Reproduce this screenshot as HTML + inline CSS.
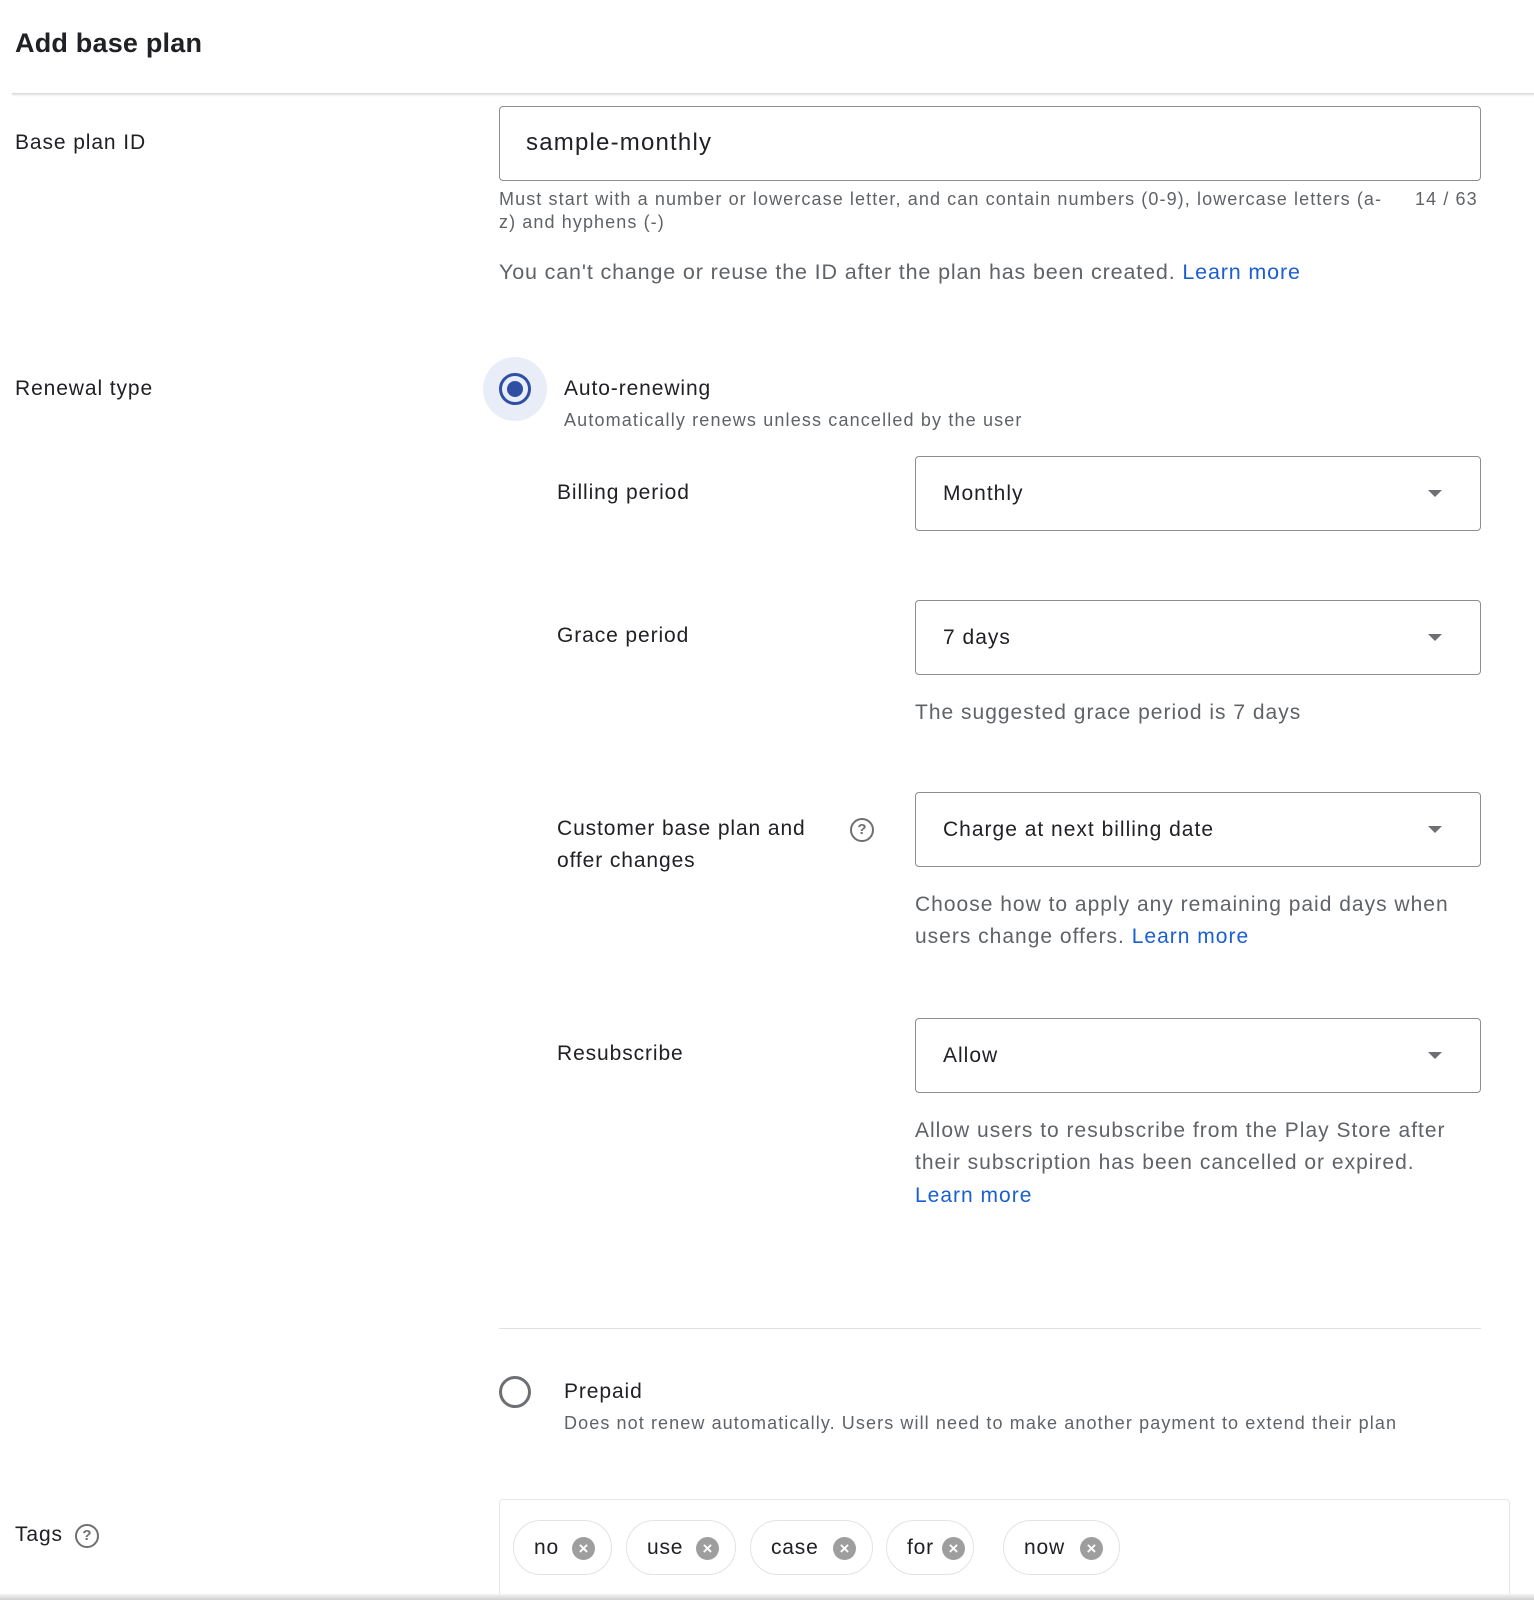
<!DOCTYPE html>
<html><head><meta charset="utf-8"><style>
*{margin:0;padding:0;box-sizing:border-box}
body{width:1534px;height:1600px;background:#fff;position:relative;overflow:hidden;font-family:"Liberation Sans",Arial,sans-serif;color:#202124}
.a{position:absolute;white-space:nowrap;line-height:28px}
.lbl{font-size:21px;color:#202124;letter-spacing:0.9px}
.help{font-size:18px;color:#5f6368;line-height:23px;letter-spacing:1.1px}
.body{font-size:21px;color:#5f6368;line-height:32px;letter-spacing:1px}
.link{color:#1a5fd0}
.box{position:absolute;border:1px solid #8a8d91;border-radius:4px;left:915px;width:566px;height:75px}
.box span{position:absolute;left:27px;top:23px;font-size:21px;color:#202124;line-height:28px;letter-spacing:1px;white-space:nowrap}
.box i{position:absolute;right:38px;top:33px;width:0;height:0;border-left:7px solid transparent;border-right:7px solid transparent;border-top:7px solid #6d6f72}
.chip{position:absolute;top:1520px;height:55px;border:1px solid #e3e3e3;border-radius:28px;font-size:21px;line-height:53px;padding-left:20px;color:#202124;letter-spacing:0.8px}
.chip b{position:absolute;right:16px;top:16px;width:23px;height:23px;border-radius:50%;background:#9e9e9e;color:#fff;font-size:17px;line-height:23px;text-align:center;font-weight:bold;letter-spacing:0}
.q{position:absolute;width:24px;height:24px;border:2px solid #6d6f72;border-radius:50%;font-size:15px;line-height:20px;text-align:center;color:#6d6f72;font-weight:bold}
</style></head><body>
<div class="a" style="left:15px;top:27px;font-size:27px;line-height:32px;color:#202124;font-weight:bold;letter-spacing:0.2px">Add base plan</div>
<div style="position:absolute;left:12px;top:93px;width:1522px;height:4px;background:linear-gradient(#d4d4d4,#f4f4f4 60%,#fff)"></div>

<div class="a lbl" style="left:15px;top:129px">Base plan ID</div>
<div style="position:absolute;left:499px;top:106px;width:982px;height:75px;border:1px solid #8a8d91;border-radius:4px"></div>
<div class="a" style="left:526px;top:129px;font-size:24px;color:#202124;letter-spacing:1.2px">sample-monthly</div>
<div class="a help" style="left:499px;top:188px">Must start with a number or lowercase letter, and can contain numbers (0-9), lowercase letters (a-</div>
<div class="a help" style="left:499px;top:211px">z) and hyphens (-)</div>
<div class="a help" style="left:1415px;top:188px">14 / 63</div>
<div class="a body" style="left:499px;top:256px;font-size:21.5px;letter-spacing:0.85px">You can't change or reuse the ID after the plan has been created. <span class="link">Learn more</span></div>

<div class="a lbl" style="left:15px;top:375px">Renewal type</div>
<div style="position:absolute;left:483px;top:357px;width:64px;height:64px;border-radius:50%;background:#e8edf8"></div>
<div style="position:absolute;left:499px;top:373px;width:32px;height:32px;border-radius:50%;border:3px solid #2e4fa3"></div>
<div style="position:absolute;left:507px;top:381px;width:16px;height:16px;border-radius:50%;background:#2e4fa3"></div>
<div class="a lbl" style="left:564px;top:375px">Auto-renewing</div>
<div class="a help" style="left:564px;top:409px;letter-spacing:1.15px">Automatically renews unless cancelled by the user</div>

<div class="a lbl" style="left:557px;top:479px">Billing period</div>
<div class="box" style="top:456px"><span>Monthly</span><i></i></div>

<div class="a lbl" style="left:557px;top:622px">Grace period</div>
<div class="box" style="top:600px"><span>7 days</span><i></i></div>
<div class="a body" style="left:915px;top:697px">The suggested grace period is 7 days</div>

<div class="a lbl" style="left:557px;top:815px">Customer base plan and</div>
<div class="a lbl" style="left:557px;top:847px">offer changes</div>
<div class="q" style="left:850px;top:818px">?</div>
<div class="box" style="top:792px"><span>Charge at next billing date</span><i></i></div>
<div class="a body" style="left:915px;top:889px">Choose how to apply any remaining paid days when</div>
<div class="a body" style="left:915px;top:921px">users change offers. <span class="link">Learn more</span></div>

<div class="a lbl" style="left:557px;top:1040px">Resubscribe</div>
<div class="box" style="top:1018px"><span>Allow</span><i></i></div>
<div class="a body" style="left:915px;top:1115px">Allow users to resubscribe from the Play Store after</div>
<div class="a body" style="left:915px;top:1147px">their subscription has been cancelled or expired.</div>
<div class="a body" style="left:915px;top:1180px"><span class="link">Learn more</span></div>

<div style="position:absolute;left:499px;top:1328px;width:982px;height:1px;background:#e0e0e0"></div>
<div style="position:absolute;left:499px;top:1376px;width:32px;height:32px;border-radius:50%;border:3px solid #6d6f72"></div>
<div class="a lbl" style="left:564px;top:1378px">Prepaid</div>
<div class="a help" style="left:564px;top:1412px">Does not renew automatically. Users will need to make another payment to extend their plan</div>

<div class="a lbl" style="left:15px;top:1521px">Tags</div>
<div class="q" style="left:75px;top:1524px">?</div>
<div style="position:absolute;left:499px;top:1499px;width:1011px;height:100px;border:1px solid #e6e6e6;border-radius:4px;border-bottom:none"></div>
<div class="chip" style="left:513px;width:99px">no<b>×</b></div>
<div class="chip" style="left:626px;width:110px">use<b>×</b></div>
<div class="chip" style="left:750px;width:123px">case<b>×</b></div>
<div class="chip" style="left:886px;width:88px">for<b style="right:8px">×</b></div>
<div class="chip" style="left:1003px;width:117px">now<b>×</b></div>
<div style="position:absolute;left:0;top:1594px;width:1534px;height:6px;background:linear-gradient(#f4f4f4,#d0d0d0)"></div>
</body></html>
